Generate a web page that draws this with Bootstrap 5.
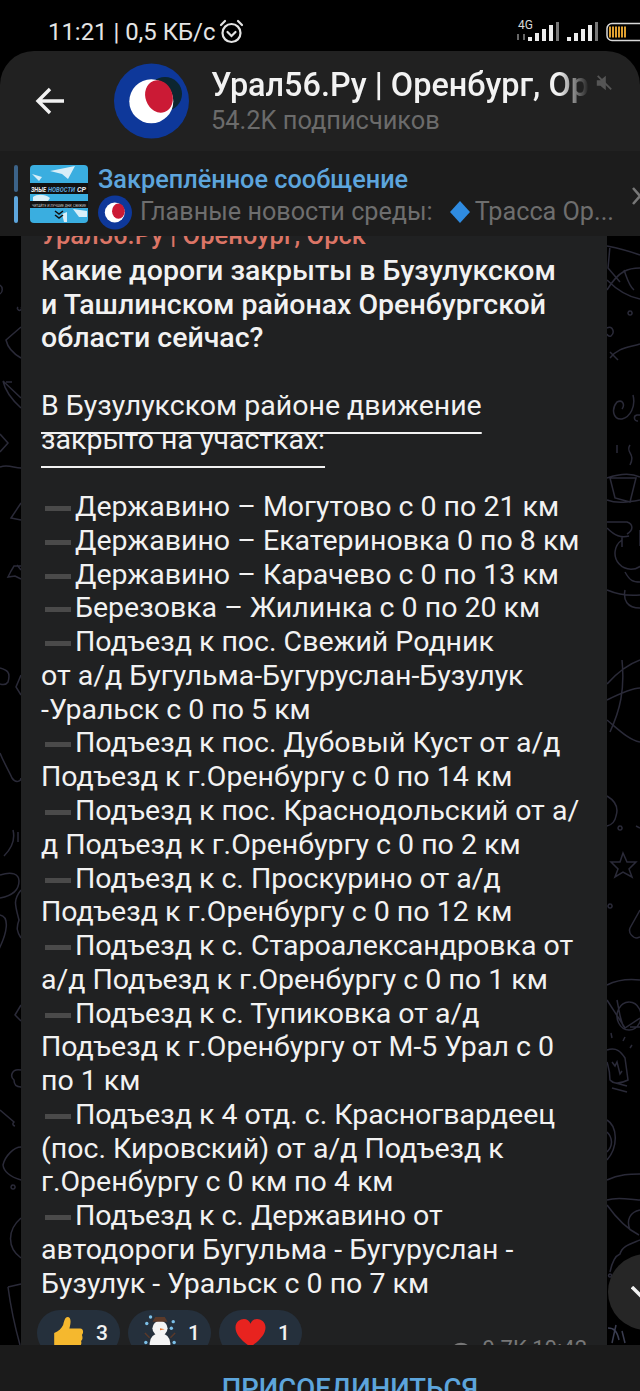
<!DOCTYPE html>
<html lang="ru">
<head>
  <meta charset="UTF-8" />
  <title>Урал56.Ру</title>
  <meta name="viewport" content="width=device-width, initial-scale=1.0"/>
  <link href="https://cdn.jsdelivr.net/npm/bootstrap@5.3.2/dist/css/bootstrap.min.css" rel="stylesheet"/>
  <style>
  body {
    font-family: Roboto, "Liberation Sans", sans-serif;
    background: #000;
    color: #f2f2f2;
    margin: 0;
  }
  .phone { width: 640px; height: 1391px; overflow: hidden; }

  .status-row { height: 51px; padding: 16px 0 0 48px; font-size: 23.9px; line-height: 32px; color: #e4e4e4; }
  .alarm-icon { margin-top: 3px; }

  .top-head {
    height: 100px;
    background: #212121;
    border-radius: 34px 34px 0 0;
    padding-left: 35px;
  }
  .back-arrow { width: 30px; margin-right: 49px; }
  .logo-big { margin-right: 22px; }
  .head-title {
    width: 378px;
    font-size: 32.4px;
    font-weight: 500;
    line-height: 37px;
    white-space: nowrap;
    overflow: hidden;
    -webkit-mask-image: linear-gradient(to right, #000 92%, transparent 100%);
    mask-image: linear-gradient(to right, #000 92%, transparent 100%);
  }
  .head-sub { font-size: 25.4px; line-height: 32px; color: #6b6b6b; }
  .mute-icon { margin: 0 0 36px 6px; }

  .pin-bar { height: 85px; background: #1c1c1c; padding-left: 14px; }
  .pin-lines { width: 4px; margin-right: 12px; }
  .pin-line-dim { height: 27px; background: #3c6388; border-radius: 2px; }
  .pin-line-on { height: 27px; background: #5da5dc; border-radius: 2px; }
  .pin-body { margin: 7px 0 0 2px; }
  .pin-title { font-size: 25.3px; font-weight: 500; line-height: 30px; color: #5da5dc; }
  .pin-text { font-size: 25.2px; line-height: 32px; color: #6e6e6e; white-space: nowrap; }
  .pin-close { position: absolute; top: 36px; right: 0; }

  .chat-area { height: 1109px; background: #000; overflow: hidden; }
  .doodles { position: absolute; left: 0; top: 0; }
  .msg-card {
    position: relative;
    width: 586px;
    margin: -16px 0 0 21px;
    padding: 0 20px;
    background: #202122;
    font-size: 28.5px;
    line-height: 33.76px;
    white-space: nowrap;
  }
  .msg-author { font-size: 25.5px; font-weight: 500; line-height: 30px; padding-bottom: 3.76px; color: #dc7566; }
  .msg-head { font-weight: 500; }
  .msg-under {
    text-decoration: underline;
    text-decoration-thickness: 2px;
    text-underline-offset: 17px;
    text-decoration-skip-ink: none;
  }
  .dash {
    display: inline-block;
    width: 26px;
    height: 5px;
    margin: 0 4px;
    background: #4a4a4a;
    vertical-align: 5px;
  }
  .reactions { margin-left: -4px; padding-top: 10px; }
  .react-pill {
    width: 83px;
    height: 46px;
    border-radius: 23px;
    background: #25303c;
    font-size: 21px;
    font-weight: 500;
    padding-left: 15px;
    gap: 11px;
  }
  .msg-meta {
    position: absolute;
    right: 20px;
    bottom: -6px;
    font-size: 22px;
    line-height: 26px;
    color: #777;
    gap: 10px;
  }
  .down-btn {
    position: absolute;
    left: 608px;
    top: 1018px;
    width: 76px;
    height: 76px;
    border-radius: 50%;
    background: #262626;
  }
  .down-mark { position: absolute; left: 23px; top: 32px; }
  .bottom-bar {
    height: 46px;
    background: #1b1b1b;
    font-size: 27.5px;
    font-weight: 500;
    line-height: 30px;
    color: #5da5dc;
    padding: 29px 0 0 60px;
    overflow: hidden;
  }
  </style>
</head>
<body>
<div class="phone d-flex flex-column">

  <!-- status bar -->
  <div class="status-row d-flex align-items-start">
    <span class="text-nowrap">11:21 | 0,5 КБ/с</span>
    <svg class="alarm-icon flex-shrink-0 ms-1" width="25" height="25" viewBox="0 0 25 25" fill="none" stroke="#e4e4e4" stroke-width="2.2">
      <circle cx="12.5" cy="14" r="9"/>
      <path d="M8.500 13l4 4 4-4M2 6l4-4M23 6l-4-4" stroke-linecap="round"/>
    </svg>
    <svg class="flex-shrink-0 ms-auto" width="124" height="26" viewBox="516 16 124 26">
      <text x="518" y="29" font-size="12" fill="#d8d8d8" font-family="Roboto">4G</text>
      <path d="M518 34v6M524 34v6" stroke="#666" stroke-width="2"/>
      <g fill="#ececec">
        <rect x="528" y="37" width="4" height="4"/><rect x="535" y="33" width="4" height="8"/><rect x="542" y="29" width="4" height="12"/><rect x="549" y="25" width="4" height="16"/>
        <rect x="567" y="37" width="4" height="4"/><rect x="574" y="33" width="4" height="8"/><rect x="581" y="29" width="4" height="12"/><rect x="588" y="25" width="4" height="16"/>
      </g>
      <rect x="556" y="22" width="3" height="19" fill="#777"/>
      <rect x="595" y="22" width="3" height="19" fill="#777"/>
      <rect x="607" y="23.5" width="40" height="17" rx="5" fill="none" stroke="#d8d8d8" stroke-width="1.5"/>
      <path d="M610 26.500v11M613 26.500v11M616 26.500v11M619 26.500v11M622 26.500v11M625 26.500v11" stroke="#e0a030" stroke-width="2"/>
    </svg>
  </div>

  <!-- channel header -->
  <div class="top-head d-flex align-items-center">
    <svg class="back-arrow" height="28" viewBox="0 0 30 28" fill="none" stroke="#f2f2f2" stroke-width="3.4">
      <path d="M29 14H3M15 2L3 14l12 12"/>
    </svg>
    <svg class="logo-big flex-shrink-0" width="75" height="76" viewBox="0 0 75 76">
      <circle cx="37.5" cy="38" r="37.5" fill="#0e389a"/>
      <circle cx="51" cy="31" r="17" fill="#0c2630"/>
      <circle cx="37.3" cy="38.3" r="22" fill="#fff"/>
      <ellipse cx="45" cy="33.5" rx="13.5" ry="16.5" transform="rotate(-20 45 33.5)" fill="#cb1a35"/>
    </svg>
    <div>
      <div class="head-title">Урал56.Ру | Оренбург, Ор</div>
      <div class="head-sub">54.2K подписчиков</div>
    </div>
    <svg class="mute-icon flex-shrink-0" width="18" height="18" viewBox="0 0 20 20" fill="#555">
      <path d="M2 7h4l6-5v16l-6-5H2z"/>
      <path d="M3 2l15 15" stroke="#555" stroke-width="2"/>
    </svg>
  </div>

  <!-- pinned message -->
  <div class="pin-bar d-flex align-items-center position-relative">
    <div class="pin-lines d-flex flex-column gap-1 flex-shrink-0">
      <div class="pin-line-dim"></div>
      <div class="pin-line-on"></div>
    </div>
    <svg class="flex-shrink-0 me-2" width="58" height="58" viewBox="0 0 58 58">
      <rect width="58" height="58" rx="4" fill="#3aaee0"/>
      <path d="M20 6L45 1 38 14 32 9z" fill="#d8eef8"/>
      <path d="M2 9l10 3-3 4z" fill="#d8eef8"/>
      <path d="M3 32c4-3 12-3 17 1l-2 3H3z" fill="#d8eef8"/>
      <path d="M43 44l14 2v6l-8 0zM32 49l5-2v10h-3z" fill="#d8eef8"/>
      <rect y="18" width="58" height="11" fill="#111"/>
      <rect y="36" width="58" height="7" fill="#111"/>
      <g font-size="8" font-weight="700" font-style="italic" font-family="Roboto">
        <text x="1" y="26.5" fill="#eee" textLength="15" lengthAdjust="spacingAndGlyphs">ЗНЫЕ</text>
        <text x="18" y="26.5" fill="#5da5dc" textLength="27" lengthAdjust="spacingAndGlyphs">НОВОСТИ</text>
        <text x="47" y="26.5" fill="#eee" textLength="9" lengthAdjust="spacingAndGlyphs">СР</text>
      </g>
      <text x="2" y="41.5" font-size="4" fill="#ccc" font-family="Roboto" textLength="54" lengthAdjust="spacingAndGlyphs">ЧИТАЙТЕ И ЛУЧШИЕ ДНИ, СВЕЖИЕ</text>
      <path d="M25 46l4 3 4-3M25 50l4 3 4-3" stroke="#111" stroke-width="1.5" fill="none"/>
    </svg>
    <div class="pin-body">
      <div class="pin-title">Закреплённое сообщение</div>
      <div class="pin-text d-flex align-items-center">
        <svg class="flex-shrink-0 me-2" width="34" height="35" viewBox="0 0 75 76">
          <circle cx="37.5" cy="38" r="37.5" fill="#0e389a"/>
          <circle cx="37" cy="38" r="22" fill="#fff"/>
          <ellipse cx="45" cy="35" rx="14" ry="17" fill="#cb1a35"/>
        </svg>
        <span>Главные новости среды:</span>
        <svg class="flex-shrink-0 ms-3 me-1" width="22" height="24" viewBox="0 0 22 24"><path d="M11 1l10 11-10 11L1 12z" fill="#2f8be0"/></svg>
        <span>Трасса Ор...</span>
      </div>
    </div>
    <svg class="pin-close" width="8" height="18" viewBox="0 0 8 18" fill="none" stroke="#777" stroke-width="2.5">
      <path d="M1 1l14 16M15 1L1 17"/>
    </svg>
  </div>

  <!-- messages -->
  <div class="chat-area position-relative flex-shrink-0">
    <svg class="doodles" width="640" height="1109" viewBox="0 236 640 1109" fill="none" stroke="#2a2a38" stroke-width="1.5">
      <path d="M0 285c3 2 3 7 0 9M18 307a2 2 0 1 0 3 0M21 327L6 340c2 9 8 14 15 18M3 381l18 17M3 381c2 9 8 18 18 27M6 382l6 0M0 434l8 9-8 9M0 467c8-3 14 1 21 1M21 503l-10 15 10 2M21 566l-7 0-3 5-3 6 7-1 6 3M21 570l-4-5M0 668c7 2 11 4 8 14-2 3-5 3-8 2M21 675l-5 12 5 8M0 753c4 10 10 20 12 25 4 6 9 3 9 0M13 830c3 12-3 20-9 26M18 832v10M0 875c12-4 19-1 19 6 0 10-8 15-19 17M0 915c10 2 7 18-1 34M21 890c-8 10-6 15-2 30-3 8-2 12 2 18M21 1005l-6 10 6 6M21 1070c-10-2-11 7-7 10 0 5 3 7 7 7M0 1110l14 12c-3 3 1 4 1 4M21 1147c-7 0-16 9-18 18 1 8 8 12 18 15M13 1185a2 2 0 1 0 .1 0M21 1218c-14 12-14 30 0 40M8 1287l13-3M8 1287c2 15 7 40 12 58"/>
      <path d="M607 246c20 4 30 8 33 9M610 246l-2 22 12 14M607 290c12-20 22-22 33-22M624 270c3 8 5 16 10 20M607 280c12 12 22 17 33 19M630 311a2 2 0 1 0 .1 0M607 328c6-3 8 5 4 8-3 1-4-2-4-2M610 358c8-10 16-10 30-14M610 352l8 8M633 395c3 12-3 22-11 24-9 1-11-10-5-17 6-3 8 3 5 7M640 415h-3a1 1 0 1 0 1 6M630 445c-5 8 6 8 0 20M617 445v8M607 478c12-4 24-5 33-1M607 500c10 4 22 2 33 0M610 478l26 0-6 24-15-4zM607 528c8 8 14 10 22 8M640 530v16M607 522h20c6 2 7 8 0 12M622 540a16 16 0 1 0 18 0M622 537v10M625 572c5 9 8 10 15 10M607 590c12 5 22 6 33 5M625 590c-2 10 2 18 15 18M640 660c-14 5-24 14-33 24M622 660c3 30-2 50-12 72M607 700c12-6 25-12 33-12M607 720c12 10 22 20 33 22"/>
      <path d="M607 796c10 6 11 14 9 20-1 6-5 9-9 10M620 826a2 2 0 1 0 .1 0M636 826l4 2M623 853l4 9 9 0-7 7 3 8-9-5-8 5 3-8-7-7 9 0zM610 904a2 2 0 1 0 .1 0M640 910l-10 18c-2 5 3 10 7 10l3-1M607 985c12-6 24-6 33-5M607 1000l18 28 15-10M617 1000c3 15 4 25 8 28M629 1002a12 14 0 1 0 .1 0M640 1027h-10M611 1033l1 5M625 1037l-2 4M632 1045l-2 3M607 1050c10-3 14 2 18 8l3 22c-8 4-14 4-18 0 0-10-2-14-3-18M612 1062l3 4 2-4 3 12 2-3M612 1082l15 4M612 1088l15 4M607 1120c10 6 12 26 0 40M607 1132c6 6 6 14 0 20M607 1180c12-6 24-6 33-6M607 1200c12-4 24 0 33 0M607 1205c10 14 20 24 32 30M640 1210c-10 2-14 10-10 20M640 1240c-10 4-18 6-20 14-5 2-8 8-10 18M610 1274a1.500 1.500 0 1 0 .1 0"/>
      <path stroke="#3a3d50" d="M608 1328c6 0 9 3 11 12M612 1343l4-18M625 1343l-3-12"/>
    </svg>

    <div class="msg-card">
      <div class="msg-author">Урал56.Ру | Оренбург, Орск</div>
      <div class="msg-head">Какие дороги закрыты в Бузулукском<br>и Ташлинском районах Оренбургской<br>области сейчас?</div>
      <br>
      <div class="msg-under">В Бузулукском районе движение<br>закрыто на участках:</div>
      <br>
      <div>
        <span class="dash"></span>Державино – Могутово с 0 по 21 км<br>
        <span class="dash"></span>Державино – Екатериновка 0 по 8 км<br>
        <span class="dash"></span>Державино – Карачево с 0 по 13 км<br>
        <span class="dash"></span>Березовка – Жилинка с 0 по 20 км<br>
        <span class="dash"></span>Подъезд к пос. Свежий Родник<br>
        от а/д Бугульма-Бугуруслан-Бузулук<br>
        -Уральск с 0 по 5 км<br>
        <span class="dash"></span>Подъезд к пос. Дубовый Куст от а/д<br>
        Подъезд к г.Оренбургу с 0 по 14 км<br>
        <span class="dash"></span>Подъезд к пос. Краснодольский от а/<br>
        д Подъезд к г.Оренбургу с 0 по 2 км<br>
        <span class="dash"></span>Подъезд к с. Проскурино от а/д<br>
        Подъезд к г.Оренбургу с 0 по 12 км<br>
        <span class="dash"></span>Подъезд к с. Староалександровка от<br>
        а/д Подъезд к г.Оренбургу с 0 по 1 км<br>
        <span class="dash"></span>Подъезд к с. Тупиковка от а/д<br>
        Подъезд к г.Оренбургу от М-5 Урал с 0<br>
        по 1 км<br>
        <span class="dash"></span>Подъезд к 4 отд. с. Красногвардеец<br>
        (пос. Кировский) от а/д Подъезд к<br>
        г.Оренбургу с 0 км по 4 км<br>
        <span class="dash"></span>Подъезд к с. Державино от<br>
        автодороги Бугульма - Бугуруслан -<br>
        Бузулук - Уральск с 0 по 7 км
      </div>
      <div class="reactions d-flex gap-2">
        <div class="react-pill d-flex align-items-center">
          <svg width="33" height="34" viewBox="0 0 34 38"><path d="M1 19c5-2 8-5 10-9 1-4 2-9 5-9 4 0 4 6 2 13h12c4 0 4 5 2 7 1 3 1 5-1 7 1 3 0 5-2 6 0 3-2 4-5 4H12c-3 0-6-1-11-3z" fill="#f5b82e"/></svg>
          <span>3</span>
        </div>
        <div class="react-pill d-flex align-items-center">
          <svg width="34" height="36" viewBox="0 0 36 38">
            <circle cx="18" cy="30" r="11" fill="#f4f4f4"/>
            <circle cx="18" cy="14" r="8" fill="#f4f4f4"/>
            <path d="M10 7h16l-3-5H13z" fill="#5b3a2a"/>
            <path d="M18 14l5 1-5 1z" fill="#e8762c"/>
            <path d="M7 24L2 19M29 24l5-5" stroke="#5b3a2a" stroke-width="1.5"/>
            <g fill="#7cc0e8"><circle cx="4" cy="9" r="1.8"/><circle cx="32" cy="7" r="1.8"/><circle cx="3" cy="29" r="1.8"/><circle cx="33" cy="29" r="1.8"/><circle cx="8" cy="2" r="1.8"/><circle cx="30" cy="14" r="1.8"/></g>
          </svg>
          <span>1</span>
        </div>
        <div class="react-pill d-flex align-items-center">
          <svg width="33" height="30" viewBox="0 0 34 32"><path d="M17 31C8 24 1 18 1 10 1 4 6 1 10 1c3 0 6 2 7 5 1-3 4-5 7-5 4 0 9 3 9 9 0 8-7 14-16 21z" fill="#e8231f"/></svg>
          <span>1</span>
        </div>
      </div>
      <div class="msg-meta d-flex align-items-center">
        <svg width="22" height="16" viewBox="0 0 24 16"><path d="M1 8c5-9 17-9 22 0-5 9-17 9-22 0z" fill="#777"/></svg>
        <span>9.7K 10:42</span>
      </div>
    </div>

    <div class="down-btn">
      <svg class="down-mark" width="20" height="20" viewBox="0 0 20 20" fill="none" stroke="#f2f2f2" stroke-width="3.4">
        <path d="M1 1l16 16"/>
      </svg>
    </div>
  </div>

  <!-- join button -->
  <div class="bottom-bar text-center">ПРИСОЕДИНИТЬСЯ</div>
</div>
<script src="https://cdn.jsdelivr.net/npm/bootstrap@5.3.2/dist/js/bootstrap.bundle.min.js"></script>
</body>
</html>
